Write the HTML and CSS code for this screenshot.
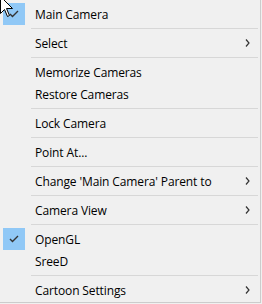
FILE: index.html
```html
<!DOCTYPE html>
<html lang="en">
<head>
    <meta charset="UTF-8">
    <title>Context Menu</title>
    <link rel="stylesheet" href="styles.css">
</head>
<body>
    <ul class="menu">
        <li class="item">
            <span class="check on"><svg width="10" height="8" viewBox="0 0 10 8"><path d="M1 4 L3.5 6.5 L9 1" fill="none" stroke="#333" stroke-width="1.4"/></svg></span>
            <span class="label">Main Camera</span>
        </li>
        <li class="sep"></li>
        <li class="item">
            <span class="check"></span>
            <span class="label">Select</span>
            <svg class="arrow" width="5" height="8" viewBox="0 0 5 8"><path d="M1 0.5 L4 4 L1 7.5" fill="none" stroke="#333" stroke-width="1.2"/></svg>
        </li>
        <li class="sep"></li>
        <li class="item">
            <span class="check"></span>
            <span class="label">Memorize Cameras</span>
        </li>
        <li class="item">
            <span class="check"></span>
            <span class="label">Restore Cameras</span>
        </li>
        <li class="sep"></li>
        <li class="item">
            <span class="check"></span>
            <span class="label">Lock Camera</span>
        </li>
        <li class="sep"></li>
        <li class="item">
            <span class="check"></span>
            <span class="label">Point At...</span>
        </li>
        <li class="sep"></li>
        <li class="item">
            <span class="check"></span>
            <span class="label">Change 'Main Camera' Parent to</span>
            <svg class="arrow" width="5" height="8" viewBox="0 0 5 8"><path d="M1 0.5 L4 4 L1 7.5" fill="none" stroke="#333" stroke-width="1.2"/></svg>
        </li>
        <li class="sep"></li>
        <li class="item">
            <span class="check"></span>
            <span class="label">Camera View</span>
            <svg class="arrow" width="5" height="8" viewBox="0 0 5 8"><path d="M1 0.5 L4 4 L1 7.5" fill="none" stroke="#333" stroke-width="1.2"/></svg>
        </li>
        <li class="sep"></li>
        <li class="item">
            <span class="check on"><svg width="10" height="8" viewBox="0 0 10 8"><path d="M1 4 L3.5 6.5 L9 1" fill="none" stroke="#333" stroke-width="1.4"/></svg></span>
            <span class="label">OpenGL</span>
        </li>
        <li class="item">
            <span class="check"></span>
            <span class="label">SreeD</span>
        </li>
        <li class="sep"></li>
        <li class="item">
            <span class="check"></span>
            <span class="label">Cartoon Settings</span>
            <svg class="arrow" width="5" height="8" viewBox="0 0 5 8"><path d="M1 0.5 L4 4 L1 7.5" fill="none" stroke="#333" stroke-width="1.2"/></svg>
        </li>
    </ul>

    <!-- mouse pointer over the first item -->
    <svg class="cursor" width="14" height="22" viewBox="0 0 14 22">
        <path d="M0.5 0.5 L0.5 17.5 L4.5 13.5 L7.5 20.5 L9.5 19.5 L6.5 12.5 L12.5 12.5 Z" fill="#fff" stroke="#000" stroke-width="1"/>
    </svg>
</body>
</html>
```
FILE: styles.css
```css
body {
    margin: 0;
    background-color: #f0f0f0;
    font-family: "Open Sans", "Noto Sans", sans-serif;
    font-size: 12px;
    color: #000;
    position: relative;
}
.menu {
    list-style: none;
    margin: 0;
    padding: 3px 0 1px 0;
    width: 260px;
    background-color: #f0f0f0;
    border-right: 1px solid #cccccc;
    border-bottom: 1px solid #cccccc;
}
.item {
    display: flex;
    align-items: center;
    height: 22px;
}
.check {
    width: 22px;
    height: 22px;
    margin-left: 3px;
    margin-right: 10px;
    display: flex;
    align-items: center;
    justify-content: center;
}
.check.on {
    background-color: #90c8f6;
}
.label {
    white-space: nowrap;
    letter-spacing: -0.12px;
}
.arrow {
    margin-left: auto;
    margin-right: 10px;
}
.sep {
    height: 1px;
    margin: 3px 2px 3px 31px;
    background-color: #d7d7d7;
}
.cursor {
    position: absolute;
    left: 0;
    top: -4px;
}
```
